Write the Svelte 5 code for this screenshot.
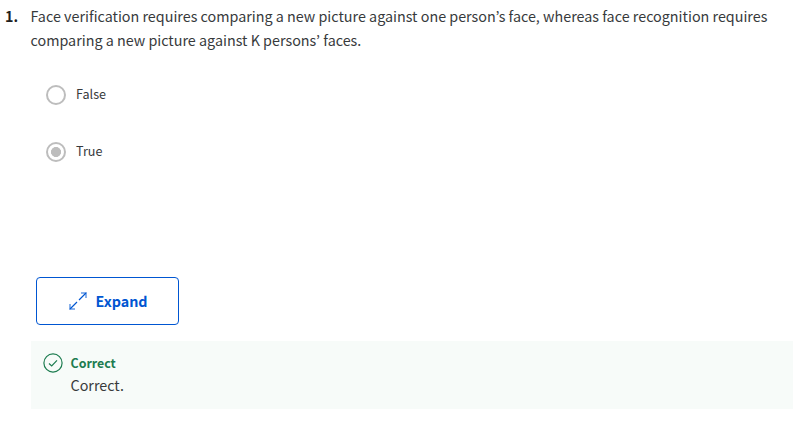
<script>
  let selected = $state('True');
  const options = ['False', 'True'];
</script>

<main>
  <section class="question">
    <span class="number">1.</span>
    <p class="prompt">
      <span>Face verification requires comparing a new picture against one person’s face, whereas face recognition requires</span>
      <span>comparing a new picture against K persons’ faces.</span>
    </p>
  </section>

  <div class="options">
    {#each options as option}
      <label>
        <input type="radio" name="answer" value={option} bind:group={selected} />
        <span>{option}</span>
      </label>
    {/each}
  </div>

  <button type="button">
    <svg width="18" height="18" viewBox="0 0 18 18" fill="none" stroke="currentColor">
      <path stroke-width="2" stroke-opacity=".45" d="M12 1h5v5M1 12v5h5" />
      <path stroke-width="1.2" d="M17 1l-7 7M1 17l7-7" />
    </svg>
    <span>Expand</span>
  </button>

  <section class="feedback">
    <svg width="20" height="20" viewBox="0 0 20 20" fill="none" stroke="currentColor" stroke-width="1.2">
      <circle cx="10" cy="10" r="9.1" />
      <path d="M6 10.5l2.7 2.5L14 7.3" />
    </svg>
    <div>
      <strong>Correct</strong>
      <p>Correct.</p>
    </div>
  </section>
</main>

<style>
  :global(body) {
    background: #fff;
  }

  main {
    box-sizing: border-box;
    width: 793px;
    height: 421px;
    padding-top: 4px;
    overflow: hidden;
    color: #373a3c;
    font-family: 'Noto Sans CJK KR', 'Noto Sans', sans-serif;
    font-size: 14.33px;
    line-height: 24px;
  }

  p {
    margin: 0;
  }

  .question {
    display: flex;
  }

  .number {
    width: 26px;
    padding-left: 5px;
    box-sizing: border-box;
    margin-right: 4.5px;
    color: #1f1f1f;
    font-weight: 700;
  }

  .prompt span {
    display: block;
    white-space: nowrap;
  }

  .options {
    display: flex;
    flex-direction: column;
    gap: 33px;
    padding: 31px 0 0 46px;
  }

  label {
    display: flex;
    align-items: center;
    gap: 10px;
    height: 24px;
    font-size: 12.6px;
  }

  label span {
    padding-bottom: 2px;
  }

  input {
    appearance: none;
    box-sizing: border-box;
    width: 20px;
    height: 20px;
    margin: 0;
    border: 2px solid #bdbdbd;
    border-radius: 50%;
  }

  input:checked {
    background: radial-gradient(circle, #bdbdbd 4.7px, transparent 5.3px);
  }

  button {
    box-sizing: border-box;
    display: flex;
    align-items: center;
    width: 143px;
    height: 48px;
    margin: 113px 0 0 36px;
    padding: 0 0 0 32px;
    gap: 8.5px;
    border: 1px solid #0056d2;
    border-radius: 4px;
    background: #fff;
    color: #0056d2;
    font: 700 14.3px/24px 'Noto Sans CJK KR', 'Noto Sans', sans-serif;
  }

  .feedback {
    box-sizing: border-box;
    display: flex;
    gap: 7.5px;
    height: 68px;
    margin: 16px 0 0 31px;
    padding: 12px 0 0 12px;
    background: #f7fbf9;
  }

  .feedback svg {
    color: #1d7c50;
  }

  .feedback strong {
    display: block;
    color: #1d7c50;
    font-size: 12.4px;
    line-height: 20px;
  }
</style>
